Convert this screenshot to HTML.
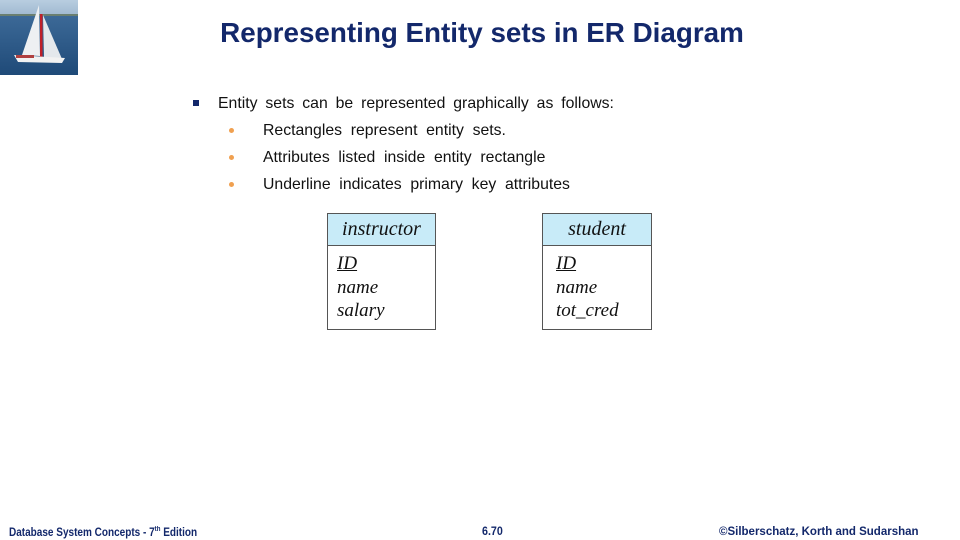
<!DOCTYPE html>
<html><head><meta charset="utf-8"><style>
body{margin:0;width:960px;height:540px;background:#fff;position:relative;overflow:hidden;font-family:"Liberation Sans",sans-serif}
.a{position:absolute;white-space:nowrap}
.t{left:0;width:964px;text-align:center;top:17px;font-size:27.8px;font-weight:bold;color:#13286b}
.l1{left:218px;top:95px;font-size:15.8px;color:#111;word-spacing:3.5px}
.l2{left:263px;font-size:15.8px;color:#111;word-spacing:4.3px}
.sq{left:193px;top:100px;width:6px;height:6px;background:#13286b}
.dot{left:229px;width:5px;height:5px;border-radius:50%;background:#f0a050}
.box{position:absolute;border:1px solid #555;background:#fff}
.hd{background:#c8ebf8;border-bottom:1px solid #555;height:31px;font-family:"Liberation Serif",serif;font-style:italic;font-size:20px;text-align:center;line-height:31px;color:#111}
.bd{font-family:"Liberation Serif",serif;font-style:italic;font-size:19px;line-height:23.5px;padding:6px 0 0 9px;color:#111}
.f{top:526px;font-size:11.5px;font-weight:bold;color:#13286b;transform:scaleX(0.93);transform-origin:left}
</style></head><body>
<svg class="a" style="left:0;top:0" width="78" height="75" viewBox="0 0 78 75">
<defs><linearGradient id="s" x1="0" y1="0" x2="0" y2="1"><stop offset="0" stop-color="#b8cde0"/><stop offset="1" stop-color="#9fb8d0"/></linearGradient>
<linearGradient id="w" x1="0" y1="0" x2="0" y2="1"><stop offset="0" stop-color="#3d6a98"/><stop offset="1" stop-color="#1f4a78"/></linearGradient></defs>
<rect width="78" height="16" fill="url(#s)"/><rect y="14" width="78" height="61" fill="url(#w)"/>
<rect y="14" width="78" height="2" fill="#6a7f70"/>
<polygon points="39,5 40,56 22,55" fill="#eef0f2"/>
<polygon points="43,15 44,58 62,59" fill="#e4e8ec"/>
<rect x="40" y="14" width="2.5" height="44" fill="#c0202a"/>
<polygon points="14,55 65,58 62,63 18,62" fill="#f2f2f2"/>
<rect x="16" y="55" width="18" height="3" fill="#b04040"/>
</svg>
<div class="a t">Representing Entity sets in ER Diagram</div>
<div class="a sq"></div>
<div class="a l1">Entity sets can be represented graphically as follows:</div>
<div class="a dot" style="top:128px"></div><div class="a l2" style="top:122px">Rectangles represent entity sets.</div>
<div class="a dot" style="top:155px"></div><div class="a l2" style="top:149px">Attributes listed inside entity rectangle</div>
<div class="a dot" style="top:182px"></div><div class="a l2" style="top:176px">Underline indicates primary key attributes</div>
<div class="box" style="left:327px;top:213px;width:107px;height:115px"><div class="hd">instructor</div><div class="bd"><u>ID</u><br>name<br>salary</div></div>
<div class="box" style="left:542px;top:213px;width:108px;height:115px"><div class="hd">student</div><div class="bd" style="padding-left:13px"><u>ID</u><br>name<br>tot_cred</div></div>
<div class="a f" style="left:9px;transform:scaleX(0.87)">Database System Concepts - 7<sup style="font-size:7px">th</sup> Edition</div>
<div class="a f" style="left:482px">6.70</div>
<div class="a f" style="left:719px;transform:scaleX(1.0)">©Silberschatz, Korth and Sudarshan</div>
</body></html>
